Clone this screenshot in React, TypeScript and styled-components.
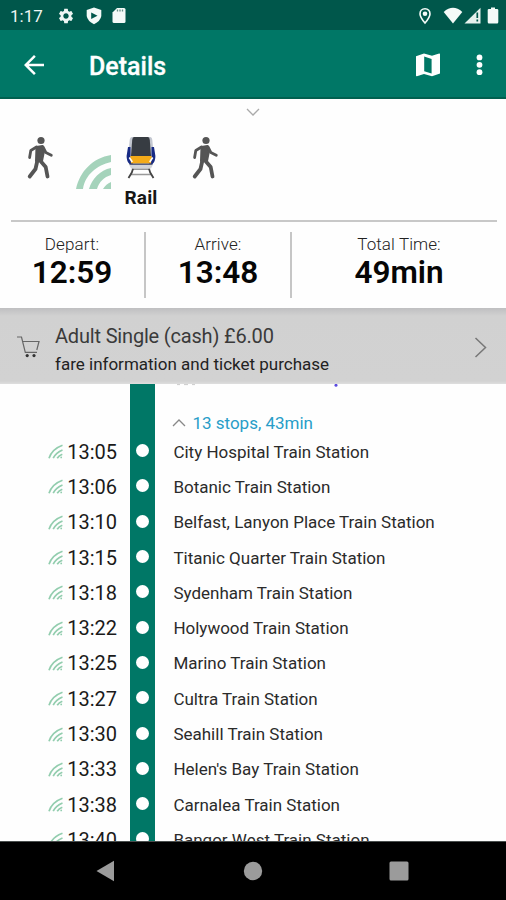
import React from 'react';
import styled, { createGlobalStyle } from 'styled-components';
import { MdArrowBack, MdSettings } from 'react-icons/md';

const GlobalStyle = createGlobalStyle`
  * { box-sizing: border-box; }
  body { margin: 0; background: #fff; font-family: Roboto, "Liberation Sans", sans-serif; color: #111; }
  svg { display: block; flex: none; }
`;

const Screen = styled.div`
  width: 506px;
  height: 900px;
  display: flex;
  flex-direction: column;
  overflow: hidden;
  background: #fefefe;
`;

const StatusBar = styled.header`
  height: 30px;
  flex: none;
  display: flex;
  align-items: center;
  padding: 1px 7px 0 10px;
  background: #00574b;
  color: #eef6f4;
`;

const Clock = styled.span`
  width: 47px;
  font-size: 17px;
  line-height: 20px;
`;

const Icons = styled.div<{ $gap: number; $end?: boolean }>`
  display: flex;
  align-items: center;
  gap: ${p => p.$gap}px;
  margin-left: ${p => (p.$end ? 'auto' : '0')};
`;

const StatusGroup = styled(Icons)`
  margin-left: 11px;
`;

const BatterySlot = styled.span`
  margin-left: 5px;
`;

const AppBar = styled.div`
  height: 69px;
  flex: none;
  display: flex;
  align-items: center;
  padding: 2px 17px 0 19px;
  background: #007766;
  border-bottom: 2px solid #00604f;
  color: #fff;
`;

const Title = styled.h1`
  margin: 4px 0 0 40px;
  font-size: 25px;
  font-weight: 500;
  line-height: 30px;
  -webkit-text-stroke: 0.3px #fff;
`;

const Modes = styled.section`
  height: 121px;
  flex: none;
  display: flex;
  flex-direction: column;
  padding-top: 9px;
`;

const Expand = styled.div`
  display: flex;
  justify-content: center;
  height: 8px;
`;

const ModeRow = styled.div`
  display: flex;
  align-items: flex-start;
  padding: 20px 0 0 25px;
`;

const Signal = styled.div`
  padding: 19px 0 0 21px;
`;

const RailMode = styled.div`
  width: 60px;
  display: flex;
  flex-direction: column;
  align-items: center;
`;

const ModeLabel = styled.span`
  margin-top: 7px;
  font-size: 19px;
  line-height: 22px;
  font-weight: 700;
  letter-spacing: 0.2px;
  color: #161616;
`;

const LastWalk = styled.div`
  padding-left: 19px;
`;

const Rule = styled.hr`
  width: 486px;
  height: 2px;
  margin: 0 0 0 10.5px;
  border: 0;
  background: #c8c8c8;
  flex: none;
`;

const Times = styled.section`
  height: 86px;
  flex: none;
  display: grid;
  grid-template-columns: 146px 146px 214px;
  padding: 10px 0;
`;

const TimeCell = styled.div<{ $divided?: boolean }>`
  display: flex;
  flex-direction: column;
  align-items: center;
  padding-top: 2px;
  border-right: ${p => (p.$divided ? '2px solid #c6c6c6' : '0')};
`;

const TimeLabel = styled.span`
  font-size: 17px;
  line-height: 20px;
  font-weight: 300;
  letter-spacing: 0.1px;
  color: #222;
`;

const TimeValue = styled.strong`
  margin-top: 1px;
  font-size: 31.5px;
  line-height: 36px;
  font-weight: 600;
  color: #060606;
`;

const FareBanner = styled.section`
  height: 76px;
  flex: none;
  display: flex;
  align-items: center;
  padding: 2px 19px 0 17px;
  background: linear-gradient(#bfbfc1 0, #d1d1d1 8px, #d2d2d2 73px, #dedede 76px);
`;

const FareText = styled.div`
  flex: 1;
  display: flex;
  flex-direction: column;
  margin-left: 14px;
`;

const FareTitle = styled.span`
  margin-top: 6px;
  font-size: 20px;
  line-height: 26px;
  letter-spacing: -0.18px;
  color: #3a3a3a;
`;

const FareNote = styled.span`
  margin-top: 2px;
  font-size: 17px;
  line-height: 26px;
  color: #222;
`;

const Stops = styled.main`
  flex: 1;
  min-height: 0;
  overflow: hidden;
`;

const StopGrid = styled.div`
  display: grid;
  grid-template-columns: 130.4px 25px 1fr;
`;

const Track = styled.div<{ $height: number }>`
  height: ${p => p.$height}px;
  display: flex;
  align-items: center;
  justify-content: center;
  background: #007766;
`;

const Dot = styled.i`
  width: 13px;
  height: 13px;
  margin: 0 1px 2px 0;
  border-radius: 50%;
  background: #fff;
`;

const LegHeader = styled.div`
  display: flex;
  flex-direction: column;
`;

const CutOff = styled.div`
  display: flex;
  height: 29px;
  padding-left: 21px;
`;

const Summary = styled.div`
  display: flex;
  align-items: center;
  gap: 6px;
  height: 19px;
  padding-left: 17px;
  font-size: 17px;
  color: #289dc8;
`;

const StopTime = styled.div`
  display: flex;
  align-items: center;
  justify-content: flex-end;
  gap: 4px;
  padding-right: 13.4px;
  font-size: 20px;
  color: #1a1a1a;
`;

const StopName = styled.div`
  display: flex;
  align-items: center;
  padding-left: 18px;
  font-size: 17px;
  color: #2b2b2b;
  white-space: nowrap;
`;

const NavBar = styled.nav`
  height: 59px;
  flex: none;
  display: flex;
  align-items: center;
  padding: 0 97px 0 96px;
  justify-content: space-between;
  background: #000;
  border-top: 1px solid #4a4f4e;
`;

const WalkIcon = () => (
  <svg width="30" height="44" viewBox="0 0 30 44" fill="none" stroke="#555" strokeLinecap="round" strokeLinejoin="round">
    <circle cx="16" cy="4.5" r="3.6" fill="#555" stroke="none" />
    <path d="M11.5 11 L17.5 10 L19 15 L17 25 L11 25 Z" fill="#555" strokeWidth="2" />
    <path d="M11.5 11 L5.8 14.5 L4.6 21.5" strokeWidth="2.8" />
    <path d="M18 11 L20.8 16.5 L26.3 19.3" strokeWidth="2.8" />
    <path d="M12.3 25 L10.5 33 L4.7 40.5" strokeWidth="3.8" />
    <path d="M15.5 25 L20.7 31 L22.5 40.5" strokeWidth="3.8" />
  </svg>
);

const SignalIcon = () => (
  <svg width="35" height="34" viewBox="0 0 35 34">
    <path d="M0 34 C4 16 17 3 35 0 V7 C21 10 9 20 7 34 Z M13 34 C16 24 24 15 35 13 V20 C28 22 23 27 21 34 Z M27 34 Q30 29 35 27 V34 Z" fill="#a5d3bb" />
  </svg>
);

const LiveIcon = () => (
  <svg width="15" height="15" viewBox="0 0 15 15" fill="none" stroke="#92cdae" strokeWidth="1.7">
    <path d="M1 14.2 Q4 5 14.5 1.2 M5.2 14.2 Q8 8.5 14.5 6 M9.2 14.2 Q11 11.5 14.3 10.3" />
    <circle cx="13.2" cy="13.4" r=".9" fill="#92cdae" stroke="none" />
  </svg>
);

const TrainIcon = () => (
  <svg width="32" height="44" viewBox="0 0 32 44">
    <path d="M7 1 H25 Q27 1 27.3 4 L29 21 Q28 29 24 30 H8 Q4 29 3 21 L4.7 4 Q5 1 7 1Z" fill="#c3c7d0" />
    <path d="M3 11 L5.5 11 V22 L8 28 H4.5 Q1.5 25 1.6 20Z M29 11 L26.5 11 V22 L24 28 H27.5 Q30.5 25 30.4 20Z" fill="#172a84" />
    <path d="M9 1 H23 Q24.5 1 24.8 4 L26 20 H6 L7.2 4 Q7.5 1 9 1Z" fill="#373c42" />
    <path d="M5.3 20 H26.7 L26 27.5 H6Z" fill="#f4ab19" />
    <path d="M4.3 21.5 L7.3 26 M27.7 21.5 L24.7 26" stroke="#fff" strokeWidth="1.6" />
    <path d="M4 28.5 H28 L26 32.5 H6Z" fill="#d2d4d8" />
    <path d="M4.5 28.2 H27.5" stroke="#3d466c" strokeWidth="1.2" />
    <path d="M8 33.3 H24 M6 38.5 H26" stroke="#999" strokeWidth="1.6" />
    <path d="M8 32.8 L6.8 36.5 L3.5 42 M24 32.8 L25.2 36.5 L28.5 42" stroke="#444" strokeWidth="1.8" fill="none" />
  </svg>
);

const ShieldIcon = () => (
  <svg width="16" height="18" viewBox="0 0 16 18">
    <path d="M8 .5 L15.3 3 V9 Q14.5 14 8 17.3 Q1.5 14 .7 9 V3Z" fill="#f4faf8" />
    <path d="M5.2 5.5 L11.5 8.8 L5.2 12Z" fill="#00574b" />
  </svg>
);

const CardIcon = () => (
  <svg width="14" height="17" viewBox="0 0 14 17">
    <path d="M5 1 H12 Q13.5 1 13.5 2.5 V14.5 Q13.5 16 12 16 H2 Q.5 16 .5 14.5 V5.5Z" fill="#f4faf8" />
    <path d="M5.5 2.5 V4.5 M8 2.5 V4.5 M10.5 2.5 V4.5" stroke="#668f86" strokeWidth="1.3" />
  </svg>
);

const LocationIcon = () => (
  <svg width="14" height="18" viewBox="0 0 14 18">
    <path d="M7 1.8 C3.8 1.8 2 4.2 2 6.9 C2 10 7 16 7 16 S12 10 12 6.9 C12 4.2 10.2 1.8 7 1.8Z" fill="none" stroke="#f4faf8" strokeWidth="1.6" />
    <circle cx="7" cy="6.7" r="2.3" fill="#f4faf8" />
  </svg>
);

const WifiIcon = () => (
  <svg width="20" height="17" viewBox="0 0 20 17">
    <path d="M.7 5 Q10 -3.4 19.3 5 L10 16.4Z" fill="#f4faf8" />
  </svg>
);

const CellIcon = () => (
  <svg width="17" height="17" viewBox="0 0 17 17">
    <path d="M16.5 .8 V16.5 H.5Z" fill="#e6f1ed" />
    <path d="M13.3 5.5 V11 M13.3 12.5 V14.5" stroke="#00574b" strokeWidth="1.7" />
  </svg>
);

const BatteryIcon = () => (
  <svg width="12" height="17" viewBox="0 0 12 17">
    <path d="M4 .5 H8 V2 H10 Q11.3 2 11.3 3 V15 Q11.3 16.5 10 16.5 H2 Q.7 16.5 .7 15 V3 Q.7 2 2 2 H4Z" fill="#f4faf8" />
  </svg>
);

const MapIcon = () => (
  <svg width="24" height="24" viewBox="0 0 24 24">
    <path fillRule="evenodd" d="M0 3.2 L8 .5 L16 2.8 L23.2 .5 Q24 .4 24 1.2 V20.5 L16 23.2 L8 21 L.8 23.3 Q0 23.4 0 22.6Z M8.2 3.6 V18.3 L15.6 20.6 V6Z" fill="#fff" />
  </svg>
);

const MoreIcon = () => (
  <svg width="19" height="24" viewBox="0 0 19 24" fill="#fff">
    <circle cx="9.5" cy="4.4" r="2.9" /><circle cx="9.5" cy="11.8" r="2.9" /><circle cx="9.5" cy="19.2" r="2.9" />
  </svg>
);

const Chevron = ({ w, h, d, color, stroke = 1.3 }: { w: number; h: number; d: string; color: string; stroke?: number }) => (
  <svg width={w} height={h} viewBox={`0 0 ${w} ${h}`} fill="none" stroke={color} strokeWidth={stroke}>
    <path d={d} />
  </svg>
);

const CartIcon = () => (
  <svg width="24" height="22" viewBox="0 0 24 22" fill="none" stroke="#666" strokeWidth="1.2">
    <path d="M0 1 H4.5 L8.3 16.3 H20 M5.8 5.5 H22 L19.8 14" />
    <circle cx="10.2" cy="19.6" r="1.6" fill="#333" stroke="none" />
    <circle cx="17" cy="19.6" r="1.6" fill="#333" stroke="none" />
  </svg>
);

const stops = [
  ['13:05', 'City Hospital Train Station'],
  ['13:06', 'Botanic Train Station'],
  ['13:10', 'Belfast, Lanyon Place Train Station'],
  ['13:15', 'Titanic Quarter Train Station'],
  ['13:18', 'Sydenham Train Station'],
  ['13:22', 'Holywood Train Station'],
  ['13:25', 'Marino Train Station'],
  ['13:27', 'Cultra Train Station'],
  ['13:30', 'Seahill Train Station'],
  ['13:33', "Helen's Bay Train Station"],
  ['13:38', 'Carnalea Train Station'],
  ['13:40', 'Bangor West Train Station'],
];

export default function App() {
  return (
    <>
      <GlobalStyle />
      <Screen>
        <StatusBar>
          <Clock>1:17</Clock>
          <Icons $gap={10.5}>
            <MdSettings size={18} />
            <ShieldIcon />
            <CardIcon />
          </Icons>
          <Icons $gap={0} $end>
            <LocationIcon />
            <StatusGroup $gap={1}>
              <WifiIcon />
              <CellIcon />
              <BatterySlot><BatteryIcon /></BatterySlot>
            </StatusGroup>
          </Icons>
        </StatusBar>
        <AppBar>
          <MdArrowBack size={30} />
          <Title>Details</Title>
          <Icons $gap={30} $end>
            <MapIcon />
            <MoreIcon />
          </Icons>
        </AppBar>
        <Modes>
          <Expand>
            <Chevron w={14} h={8} d="M1 1 L7 7 L13 1" color="#aaa" />
          </Expand>
          <ModeRow>
            <WalkIcon />
            <Signal><SignalIcon /></Signal>
            <RailMode>
              <TrainIcon />
              <ModeLabel>Rail</ModeLabel>
            </RailMode>
            <LastWalk><WalkIcon /></LastWalk>
          </ModeRow>
        </Modes>
        <Rule />
        <Times>
          <TimeCell $divided><TimeLabel>Depart:</TimeLabel><TimeValue>12:59</TimeValue></TimeCell>
          <TimeCell $divided><TimeLabel>Arrive:</TimeLabel><TimeValue>13:48</TimeValue></TimeCell>
          <TimeCell><TimeLabel>Total Time:</TimeLabel><TimeValue>49min</TimeValue></TimeCell>
        </Times>
        <FareBanner>
          <CartIcon />
          <FareText>
            <FareTitle>Adult Single (cash) £6.00</FareTitle>
            <FareNote>fare information and ticket purchase</FareNote>
          </FareText>
          <Chevron w={13} h={21} d="M1.5 1 L11.5 10.5 L1.5 20" color="#777" stroke={1.5} />
        </FareBanner>
        <Stops>
          <StopGrid>
            <span />
            <Track $height={50} />
            <LegHeader>
              <CutOff>
                <svg width="166" height="4" viewBox="0 0 166 4">
                  <path d="M1 .6 H4 M8 .6 H12 M16 .6 H19" stroke="#ccc" strokeWidth="1" />
                  <circle cx="160" cy="1.3" r="1.5" fill="#5b4be0" />
                </svg>
              </CutOff>
              <Summary>
                <Chevron w={14} h={8} d="M1 7 L7 1 L13 7" color="#888" />
                <span>13 stops, 43min</span>
              </Summary>
            </LegHeader>
          </StopGrid>
          {stops.map(([time, name]) => (
            <StopGrid key={time}>
              <StopTime><LiveIcon />{time}</StopTime>
              <Track $height={35.3}><Dot /></Track>
              <StopName>{name}</StopName>
            </StopGrid>
          ))}
        </Stops>
        <NavBar>
          <svg width="19" height="22" viewBox="0 0 19 22"><path d="M0.5 11 L18 .8 V21.2Z" fill="#9b9b9b" /></svg>
          <svg width="22" height="20" viewBox="0 0 22 20"><circle cx="12" cy="10" r="9.2" fill="#9b9b9b" /></svg>
          <svg width="20" height="20" viewBox="0 0 20 20"><rect x=".5" y=".5" width="19" height="19" rx="1.5" fill="#9b9b9b" /></svg>
        </NavBar>
      </Screen>
    </>
  );
}
